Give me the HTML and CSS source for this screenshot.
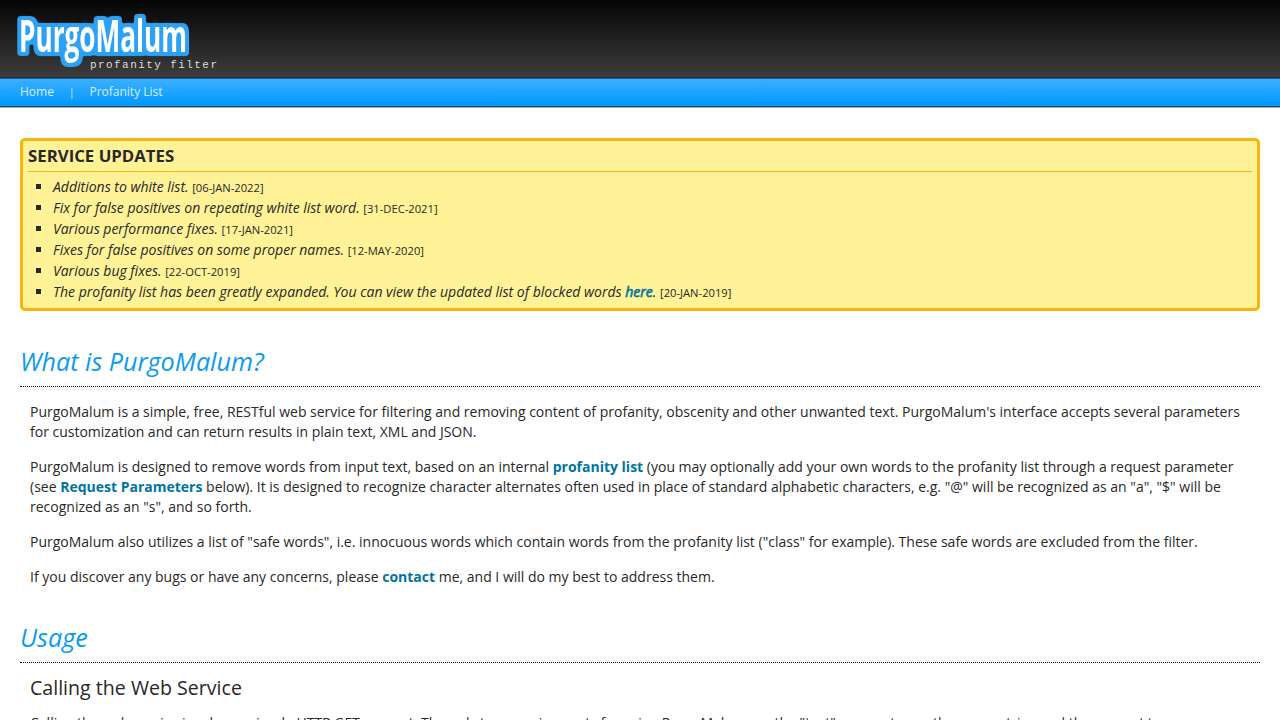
FILE: index.html
```html
<!DOCTYPE html>
<html lang="en">
<head>
    <meta charset="UTF-8">
    <title>PurgoMalum - Free Profanity Filter Web Service</title>
    <link rel="stylesheet" href="styles.css">
</head>
<body>
    <div id="header">
        <svg class="logo" width="240" height="77" viewBox="0 0 240 77">
            <defs>
                <!-- rounded blue outline around the name -->
                <filter id="outline" filterUnits="userSpaceOnUse" x="0" y="0" width="240" height="77" color-interpolation-filters="sRGB">
                    <feMorphology in="SourceAlpha" operator="dilate" radius="3"/>
                    <feGaussianBlur stdDeviation="1.5"/>
                    <feComponentTransfer result="shape">
                        <feFuncA type="linear" slope="4" intercept="-0.5"/>
                    </feComponentTransfer>
                    <feFlood flood-color="#2ba2f5"/>
                    <feComposite in2="shape" operator="in"/>
                    <feMerge>
                        <feMergeNode/>
                        <feMergeNode in="SourceGraphic"/>
                    </feMerge>
                </filter>
            </defs>
            <text class="logo-name" x="19" y="52" textLength="168" lengthAdjust="spacingAndGlyphs">PurgoMalum</text>
            <text class="logo-tag" x="90" y="68" textLength="127">profanity filter</text>
        </svg>
    </div>
    <div id="nav">
        <a href="#">Home</a><span class="sep">|</span><a href="#">Profanity List</a>
    </div>

    <div id="content">
        <div class="updates">
            <h3>SERVICE UPDATES</h3>
            <ul>
                <li><em>Additions to white list.</em> <small>[06-JAN-2022]</small></li>
                <li><em>Fix for false positives on repeating white list word.</em> <small>[31-DEC-2021]</small></li>
                <li><em>Various performance fixes.</em> <small>[17-JAN-2021]</small></li>
                <li><em>Fixes for false positives on some proper names.</em> <small>[12-MAY-2020]</small></li>
                <li><em>Various bug fixes.</em> <small>[22-OCT-2019]</small></li>
                <li><em>The profanity list has been greatly expanded. You can view the updated list of blocked words <a href="#">here</a>.</em> <small>[20-JAN-2019]</small></li>
            </ul>
        </div>

        <h1>What is PurgoMalum?</h1>
        <div class="section">
            <p>PurgoMalum is a simple, free, RESTful web service for filtering and removing content of profanity, obscenity and other unwanted text. PurgoMalum's interface accepts several parameters for customization and can return results in plain text, XML and JSON.</p>
            <p>PurgoMalum is designed to remove words from input text, based on an internal <a href="#">profanity list</a> (you may optionally add your own words to the profanity list through a request parameter (see <a href="#">Request Parameters</a> below). It is designed to recognize character alternates often used in place of standard alphabetic characters, e.g. "@" will be recognized as an "a", "$" will be recognized as an "s", and so forth.</p>
            <p>PurgoMalum also utilizes a list of "safe words", i.e. innocuous words which contain words from the profanity list ("class" for example). These safe words are excluded from the filter.</p>
            <p>If you discover any bugs or have any concerns, please <a href="#">contact</a> me, and I will do my best to address them.</p>
        </div>

        <h1>Usage</h1>
        <div class="section">
            <h2>Calling the Web Service</h2>
            <p>Calling the web service involves a simple HTTP GET request. The only two requirements for using PurgoMalum are the "text" parameter on the query string and the request type.</p>
        </div>
    </div>
</body>
</html>
```
FILE: styles.css
```css
html {
    height: 100%;
    overflow: hidden;
}

body {
    margin: 0;
    height: 100%;
    overflow: hidden;
    background: #fff;
    color: #282828;
    font-family: "Open Sans", sans-serif;
    font-size: 14px;
    line-height: 20px;
}

a {
    color: #00749f;
    font-weight: bold;
    text-decoration: none;
}

#header {
    height: 77px;
    border-bottom: 1px solid #222c33;
    background: linear-gradient(#050505, #3c3c3c);
}

.logo {
    display: block;
}

.logo-name {
    font-family: "Open Sans", sans-serif;
    font-size: 44px;
    font-weight: 700;
    fill: #fff;
    filter: url(#outline);
}

.logo-tag {
    font-family: "Liberation Mono", monospace;
    font-size: 11px;
    fill: #ddd;
}

#nav {
    height: 27px;
    line-height: 25px;
    border-top: 1px solid #1c6090;
    border-bottom: 1px solid #164a68;
    background: linear-gradient(#3aafff, #0098ff);
    box-shadow: 0 1px 0 #aaa;
    padding-left: 20px;
    font-size: 12px;
    color: #d5eeff;
}

#nav a {
    color: #d5eeff;
    font-weight: normal;
}

#nav .sep {
    margin: 0 15px;
    font-size: 10px;
}

#content {
    padding: 31px 20px 0;
}

.updates {
    border: 3px solid #fbb40b;
    border-radius: 5px;
    background: #fff297;
    padding: 5px;
}

.updates h3 {
    margin: 0 0 5px;
    padding-bottom: 5px;
    border-bottom: 1px solid #f3b90c;
    font-size: 1.2em;
    line-height: 20px;
}

.updates ul {
    margin: 0;
    padding-left: 25px;
    list-style: square;
}

.updates li {
    line-height: 20px;
}

.updates small {
    font-size: 0.8em;
}

.updates a {
    font-weight: normal;
    -webkit-text-stroke: 0.6px #00749f;
}

h1 {
    margin: 31px 0 15px;
    padding-bottom: 6px;
    border-bottom: 1px dotted #111;
    color: #0a9bf0;
    font-size: 1.8em;
    font-style: italic;
    font-weight: normal;
    line-height: 38px;
}

.section {
    padding: 0 10px;
}

.section p {
    margin: 0 0 15px;
}

h2 {
    margin: 0 0 15px;
    font-size: 1.4em;
    font-weight: normal;
    line-height: 20px;
}
```
